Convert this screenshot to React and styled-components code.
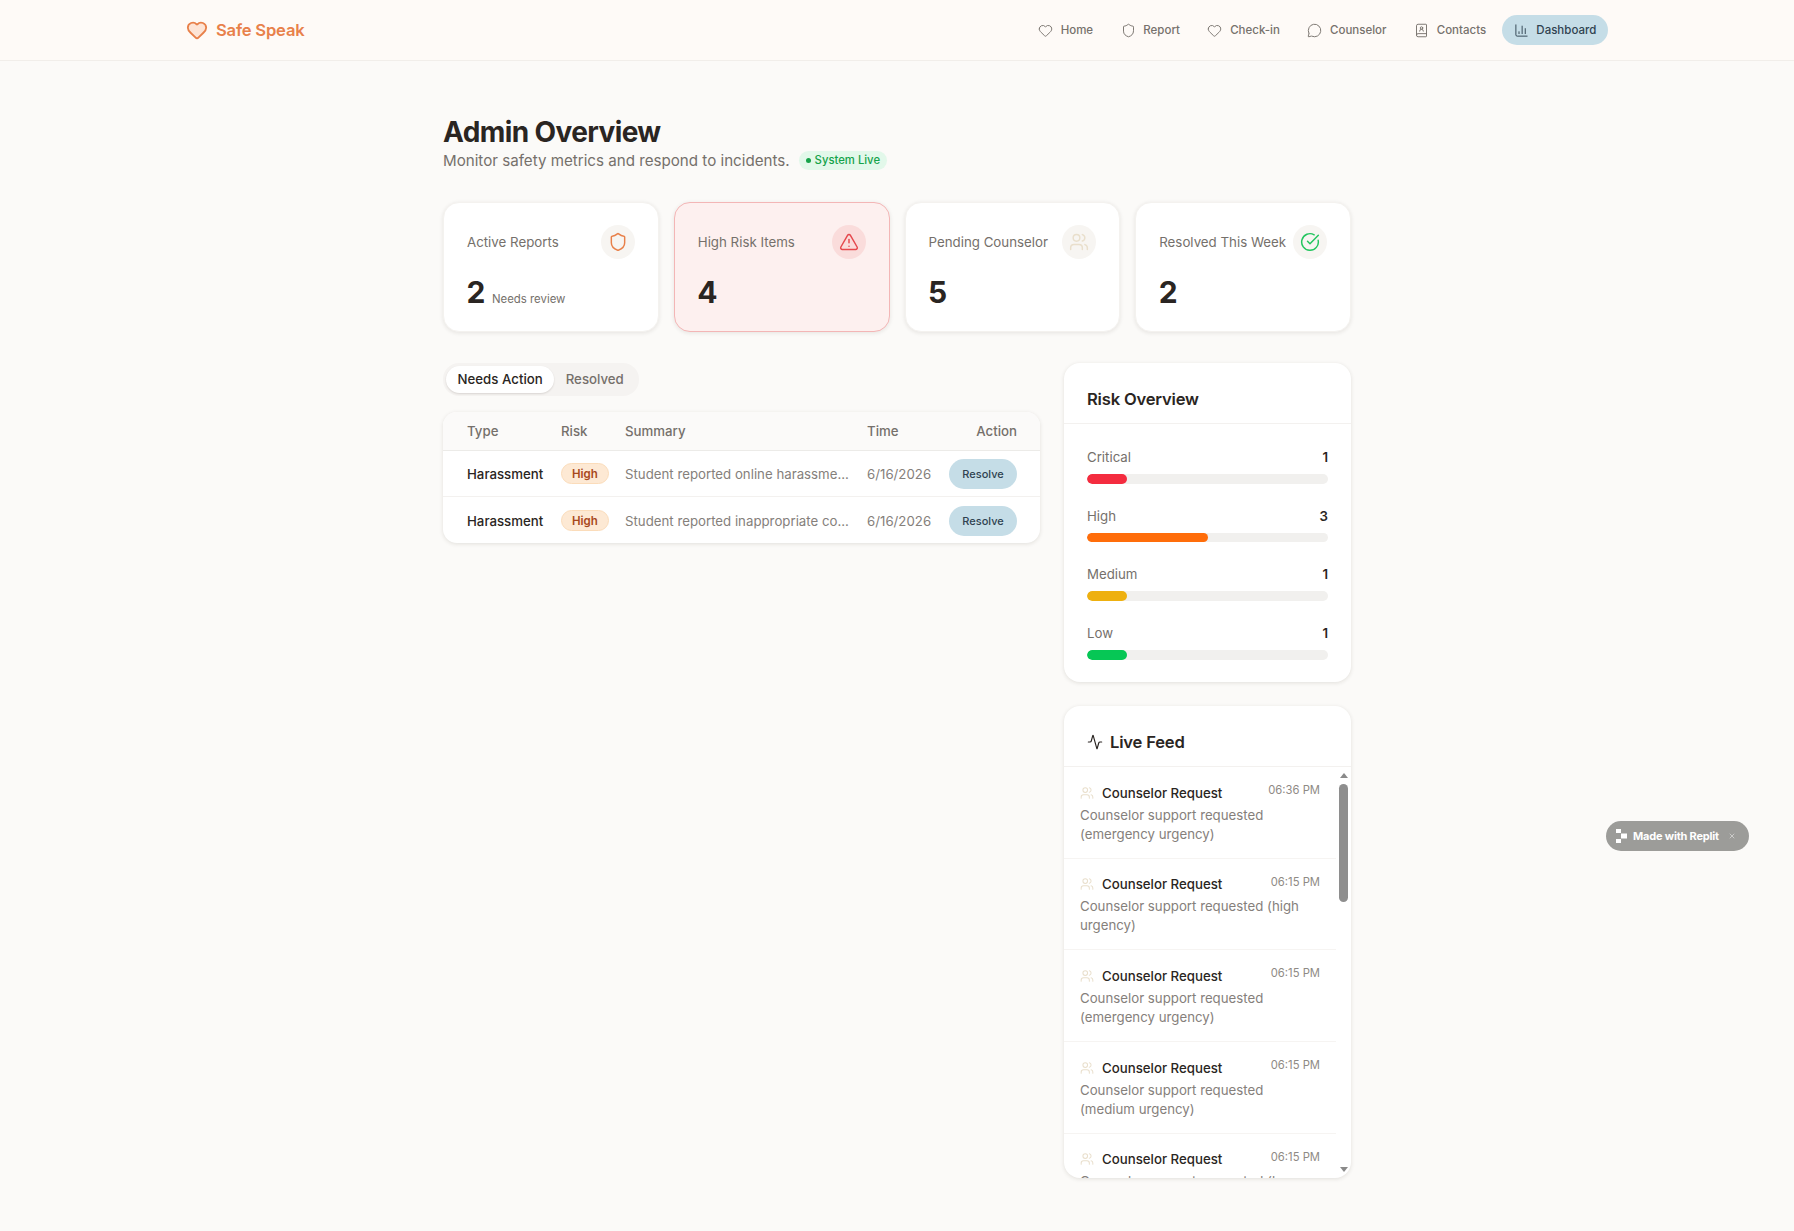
import React from 'react';
import styled, { createGlobalStyle } from 'styled-components';
import {
  Heart,
  Shield,
  MessageCircle,
  BookUser,
  ChartColumn,
  TriangleAlert,
  Users,
  CircleCheckBig,
  Activity,
  X,
} from 'lucide-react';

const navItems = [
  { label: 'Home', Icon: Heart },
  { label: 'Report', Icon: Shield },
  { label: 'Check-in', Icon: Heart },
  { label: 'Counselor', Icon: MessageCircle },
  { label: 'Contacts', Icon: BookUser },
  { label: 'Dashboard', Icon: ChartColumn, active: true },
];

const stats = [
  { label: 'Active Reports', value: 2, note: 'Needs review', Icon: Shield, color: '#e8804a' },
  { label: 'High Risk Items', value: 4, Icon: TriangleAlert, color: '#e5484d', danger: true },
  { label: 'Pending Counselor', value: 5, Icon: Users, color: '#e9dfcc' },
  { label: 'Resolved This Week', value: 2, Icon: CircleCheckBig, color: '#22c55e' },
];

const reports = [
  { summary: 'Student reported online harassme...' },
  { summary: 'Student reported inappropriate co...' },
];

const risks = [
  { label: 'Critical', count: 1, color: '#f42c3f' },
  { label: 'High', count: 3, color: '#ff6d0a' },
  { label: 'Medium', count: 1, color: '#eeb00f' },
  { label: 'Low', count: 1, color: '#06c755' },
];

const feed = [
  { time: '06:36 PM', urgency: 'emergency' },
  { time: '06:15 PM', urgency: 'high' },
  { time: '06:15 PM', urgency: 'emergency' },
  { time: '06:15 PM', urgency: 'medium' },
  { time: '06:15 PM', urgency: 'low' },
];

const GlobalStyle = createGlobalStyle`
  * {
    box-sizing: border-box;
  }

  html, body {
    margin: 0;
    background: #fbfaf8;
    font-family: Inter, "Noto Sans", sans-serif;
    color: #2a2522;
  }
`;

const Page = styled.div`
  min-height: 1231px;
`;

const Header = styled.header`
  height: 61px;
  background: #fefaf7;
  border-bottom: 1px solid #f1eeea;
`;

const HeaderInner = styled.div`
  width: 1422px;
  height: 60px;
  margin: 0 auto;
  display: flex;
  align-items: center;
  justify-content: space-between;
`;

const Logo = styled.div`
  display: flex;
  align-items: center;
  gap: 8px;
  color: #e8804a;
  font-size: 16.6px;
  font-weight: 600;
  letter-spacing: -0.2px;

  svg {
    fill: #fde4d6;
  }
`;

const Nav = styled.nav`
  display: flex;
  align-items: center;
  gap: 4px;
`;

const NavItem = styled.div`
  display: flex;
  align-items: center;
  gap: 7.8px;
  height: 30px;
  padding: 0 11.7px;
  border-radius: 15px;
  font-size: 11.5px;
  font-weight: 500;
  color: ${({ $active }) => ($active ? '#2f4250' : '#76716c')};
  background: ${({ $active }) => ($active ? '#c5dde7' : 'transparent')};
`;

const Main = styled.main`
  width: 908px;
  margin: 0 auto;
  padding-top: 53px;
`;

const Title = styled.h1`
  margin: 0;
  font-size: 28px;
  line-height: 36px;
  font-weight: 700;
  letter-spacing: -0.6px;
  color: #2a2522;
`;

const SubRow = styled.div`
  display: flex;
  align-items: center;
  gap: 9px;
  height: 20px;
`;

const Subtitle = styled.p`
  margin: 0;
  font-size: 15.15px;
  color: #75706b;
`;

const LiveBadge = styled.span`
  display: inline-flex;
  align-items: center;
  gap: 4px;
  height: 19px;
  padding: 0 7px;
  border-radius: 10px;
  background: #e2f8ea;
  color: #16a34a;
  font-size: 11.3px;
  font-weight: 500;
`;

const LiveDot = styled.i`
  width: 5px;
  height: 5px;
  border-radius: 50%;
  background: #16a34a;
`;

const StatGrid = styled.section`
  display: grid;
  grid-template-columns: repeat(4, 1fr);
  gap: 15px;
  margin-top: 32px;
`;

const StatCard = styled.div`
  height: 130px;
  padding: 22px 23px;
  border-radius: 16px;
  background: ${({ $danger }) => ($danger ? '#fdf0ef' : '#fff')};
  border: 1px solid ${({ $danger }) => ($danger ? '#f3b6b6' : '#f4f2ef')};
  box-shadow: 0 1px 4px rgba(40, 30, 20, 0.1);
`;

const StatTop = styled.div`
  display: flex;
  align-items: center;
  justify-content: space-between;
  height: 34px;
`;

const StatLabel = styled.span`
  font-size: 13.3px;
  color: #75706b;
`;

const IconCircle = styled.span`
  display: flex;
  align-items: center;
  justify-content: center;
  flex-shrink: 0;
  width: 34px;
  height: 34px;
  border-radius: 50%;
  background: ${({ $danger }) => ($danger ? '#fadcdb' : '#f7f5f2')};
`;

const StatBottom = styled.div`
  display: flex;
  align-items: baseline;
  gap: 6.5px;
  margin-top: 14px;
  margin-left: -0.5px;
`;

const StatValue = styled.span`
  font-size: 30px;
  line-height: 38px;
  font-weight: 700;
  color: #2a2522;
`;

const StatNote = styled.span`
  font-size: 11.4px;
  color: #75706b;
`;

const Columns = styled.div`
  display: grid;
  grid-template-columns: 597px 287px;
  gap: 24px;
  align-items: start;
  margin-top: 31px;
`;

const LeftColumn = styled.div`
  min-width: 0;
`;

const RightColumn = styled.div`
  display: flex;
  flex-direction: column;
  gap: 24px;
`;

const Tabs = styled.div`
  display: inline-flex;
  align-items: center;
  height: 33px;
  padding: 3px 4px 3px 3px;
  border-radius: 16px;
  background: #f5f3f1;
`;

const Tab = styled.div`
  display: flex;
  align-items: center;
  height: 27px;
  padding: 0 11.5px 1px;
  border-radius: 14px;
  font-size: 13.25px;
  font-weight: 500;
  color: ${({ $active }) => ($active ? '#2a2522' : '#75706b')};
  background: ${({ $active }) => ($active ? '#fff' : 'transparent')};
  box-shadow: ${({ $active }) => ($active ? '0 1px 2px rgba(40, 30, 20, 0.14)' : 'none')};
`;

const TableCard = styled.div`
  margin-top: 16px;
  border-radius: 14px;
  background: #fff;
  overflow: hidden;
  box-shadow: 0 1px 4px rgba(40, 30, 20, 0.12);
`;

const Table = styled.table`
  width: 100%;
  border-collapse: collapse;
  table-layout: fixed;
`;

const HeadRow = styled.tr`
  height: 38px;
  background: #fbfaf9;
`;

const Th = styled.th`
  padding: 0 0 0 ${({ $first }) => ($first ? '24px' : '0')};
  padding-right: ${({ $right }) => ($right ? '23px' : '0')};
  text-align: ${({ $right }) => ($right ? 'right' : 'left')};
  font-size: 13.25px;
  font-weight: 500;
  color: #75706b;
  border-bottom: 1px solid #ecebe8;
`;

const Row = styled.tr`
  height: 46.5px;

  & + & td {
    border-top: 1px solid #f3f1ef;
  }
`;

const Td = styled.td`
  padding: 1px 0 0 ${({ $first }) => ($first ? '24px' : '0')};
  padding-right: ${({ $right }) => ($right ? '23px' : '0')};
  text-align: ${({ $right }) => ($right ? 'right' : 'left')};
  font-size: 13.25px;
  color: ${({ $strong }) => ($strong ? '#2a2522' : '#85807b')};
  font-weight: ${({ $strong }) => ($strong ? 500 : 400)};
  white-space: nowrap;
`;

const RiskBadge = styled.span`
  display: inline-flex;
  align-items: center;
  height: 21px;
  padding: 0 10px;
  border-radius: 11px;
  background: #fde9d4;
  border: 1px solid #fbdcba;
  color: #a8481c;
  font-size: 11.5px;
  font-weight: 600;
`;

const ResolveButton = styled.button`
  height: 30px;
  width: 68px;
  padding: 0;
  border: none;
  border-radius: 15px;
  background: #c5dde7;
  color: #2f4250;
  font-family: inherit;
  font-size: 11px;
  font-weight: 500;
`;

const Panel = styled.section`
  border-radius: 16px;
  background: #fff;
  overflow: hidden;
  box-shadow: 0 1px 4px rgba(40, 30, 20, 0.12);
`;

const PanelHeader = styled.div`
  display: flex;
  align-items: center;
  gap: 7px;
  height: 61px;
  padding: 11px 23px 0;
  border-bottom: 1px solid #f3f1ef;
`;

const PanelTitle = styled.h2`
  margin: 0;
  font-size: 16.6px;
  font-weight: 600;
  letter-spacing: -0.2px;
  color: #2a2522;
`;

const RiskList = styled.div`
  display: flex;
  flex-direction: column;
  gap: 23.2px;
  padding: 24px 23px 22.5px;
`;

const RiskRow = styled.div`
  display: flex;
  flex-direction: column;
  gap: 8px;
`;

const RiskHead = styled.div`
  display: flex;
  justify-content: space-between;
  height: 18px;
  align-items: center;
  font-size: 13.25px;
  color: #75706b;

  b {
    color: #2a2522;
    font-weight: 600;
  }
`;

const Bar = styled.div`
  height: 9.5px;
  border-radius: 5px;
  background: #f1f0ee;
  overflow: hidden;
`;

const BarFill = styled.div`
  height: 100%;
  border-radius: 5px;
  background: ${({ $color }) => $color};
`;

const FeedBody = styled.div`
  display: flex;
  height: 411px;
`;

const FeedList = styled.div`
  flex: 1;
  min-width: 0;
  overflow: hidden;
`;

const FeedRail = styled.div`
  flex-shrink: 0;
  display: flex;
  flex-direction: column;
  align-items: center;
  width: 15px;
  padding: 6px 0;
`;

const RailArrow = styled.i`
  width: 0;
  height: 0;
  border-left: 4px solid transparent;
  border-right: 4px solid transparent;
  border-top: ${({ $down }) => ($down ? '5.5px solid #8a8a8a' : 'none')};
  border-bottom: ${({ $down }) => ($down ? 'none' : '5.5px solid #8a8a8a')};
  margin-top: ${({ $down }) => ($down ? 'auto' : '0')};
`;

const RailThumb = styled.div`
  width: 9px;
  height: 118px;
  margin-top: 5.5px;
  border-radius: 5px;
  background: #8e8e8e;
`;

const FeedItem = styled.div`
  height: 91.7px;
  padding: 17.5px 16px 0 16px;
  border-bottom: 1px solid #f6f4f2;
`;

const FeedTop = styled.div`
  display: flex;
  justify-content: space-between;
  align-items: flex-start;
`;

const FeedName = styled.div`
  display: flex;
  align-items: center;
  gap: 8px;
  font-size: 13.25px;
  font-weight: 500;
  color: #2a2522;
`;

const FeedTime = styled.span`
  margin-top: -1.5px;
  font-size: 11.25px;
  color: #8f8a85;
`;

const FeedText = styled.p`
  margin: 5px 0 0;
  font-size: 13.25px;
  line-height: 19px;
  color: #85807b;
`;

const ReplitBadge = styled.div`
  position: fixed;
  left: 1606px;
  top: 821px;
  display: flex;
  align-items: center;
  gap: 5px;
  width: 143px;
  height: 30px;
  padding: 0 10px;
  border-radius: 15px;
  background: #9c9c99;
  color: #fff;
  font-size: 11px;
  font-weight: 700;
  letter-spacing: -0.2px;
  white-space: nowrap;
`;

const ReplitClose = styled(X)`
  margin-left: 4px;
  opacity: 0.7;
`;

function ReplitMark() {
  return (
    <svg width="12" height="14" viewBox="0 0 12 14" fill="#fff">
      <rect x="0" y="0" width="5" height="4" />
      <rect x="5" y="4.5" width="6" height="5" />
      <rect x="0" y="10" width="5" height="4" />
    </svg>
  );
}

export default function App() {
  return (
    <Page>
      <GlobalStyle />
      <Header>
        <HeaderInner>
          <Logo>
            <Heart size={22} strokeWidth={2} />
            Safe Speak
          </Logo>
          <Nav>
            {navItems.map(({ label, Icon, active }) => (
              <NavItem key={label} $active={active}>
                <Icon size={15} strokeWidth={1.5} />
                {label}
              </NavItem>
            ))}
          </Nav>
        </HeaderInner>
      </Header>

      <Main>
        <Title>Admin Overview</Title>
        <SubRow>
          <Subtitle>Monitor safety metrics and respond to incidents.</Subtitle>
          <LiveBadge>
            <LiveDot />
            System Live
          </LiveBadge>
        </SubRow>

        <StatGrid>
          {stats.map(({ label, value, note, Icon, color, danger }) => (
            <StatCard key={label} $danger={danger}>
              <StatTop>
                <StatLabel>{label}</StatLabel>
                <IconCircle $danger={danger}>
                  <Icon size={20} color={color} strokeWidth={1.75} />
                </IconCircle>
              </StatTop>
              <StatBottom>
                <StatValue>{value}</StatValue>
                {note && <StatNote>{note}</StatNote>}
              </StatBottom>
            </StatCard>
          ))}
        </StatGrid>

        <Columns>
          <LeftColumn>
            <Tabs>
              <Tab $active>Needs Action</Tab>
              <Tab>Resolved</Tab>
            </Tabs>
            <TableCard>
              <Table>
                <colgroup>
                  <col style={{ width: 118 }} />
                  <col style={{ width: 64 }} />
                  <col style={{ width: 242 }} />
                  <col style={{ width: 82 }} />
                  <col />
                </colgroup>
                <thead>
                  <HeadRow>
                    <Th $first>Type</Th>
                    <Th>Risk</Th>
                    <Th>Summary</Th>
                    <Th>Time</Th>
                    <Th $right>Action</Th>
                  </HeadRow>
                </thead>
                <tbody>
                  {reports.map((report) => (
                    <Row key={report.summary}>
                      <Td $first $strong>Harassment</Td>
                      <Td><RiskBadge>High</RiskBadge></Td>
                      <Td>{report.summary}</Td>
                      <Td>6/16/2026</Td>
                      <Td $right><ResolveButton>Resolve</ResolveButton></Td>
                    </Row>
                  ))}
                </tbody>
              </Table>
            </TableCard>
          </LeftColumn>

          <RightColumn>
            <Panel>
              <PanelHeader>
                <PanelTitle>Risk Overview</PanelTitle>
              </PanelHeader>
              <RiskList>
                {risks.map((risk) => (
                  <RiskRow key={risk.label}>
                    <RiskHead>
                      <span>{risk.label}</span>
                      <b>{risk.count}</b>
                    </RiskHead>
                    <Bar>
                      <BarFill $color={risk.color} style={{ width: `${(risk.count / 6) * 100}%` }} />
                    </Bar>
                  </RiskRow>
                ))}
              </RiskList>
            </Panel>

            <Panel>
              <PanelHeader>
                <Activity size={16} strokeWidth={1.75} />
                <PanelTitle>Live Feed</PanelTitle>
              </PanelHeader>
              <FeedBody>
                <FeedList>
                  {feed.map((item, i) => (
                    <FeedItem key={i}>
                      <FeedTop>
                        <FeedName>
                          <Users size={14} color="#e9dfcc" strokeWidth={1.75} />
                          Counselor Request
                        </FeedName>
                        <FeedTime>{item.time}</FeedTime>
                      </FeedTop>
                      <FeedText>Counselor support requested ({item.urgency} urgency)</FeedText>
                    </FeedItem>
                  ))}
                </FeedList>
                <FeedRail>
                  <RailArrow />
                  <RailThumb />
                  <RailArrow $down />
                </FeedRail>
              </FeedBody>
            </Panel>
          </RightColumn>
        </Columns>
      </Main>

      <ReplitBadge>
        <ReplitMark />
        Made with Replit
        <ReplitClose size={8} strokeWidth={2} />
      </ReplitBadge>
    </Page>
  );
}
